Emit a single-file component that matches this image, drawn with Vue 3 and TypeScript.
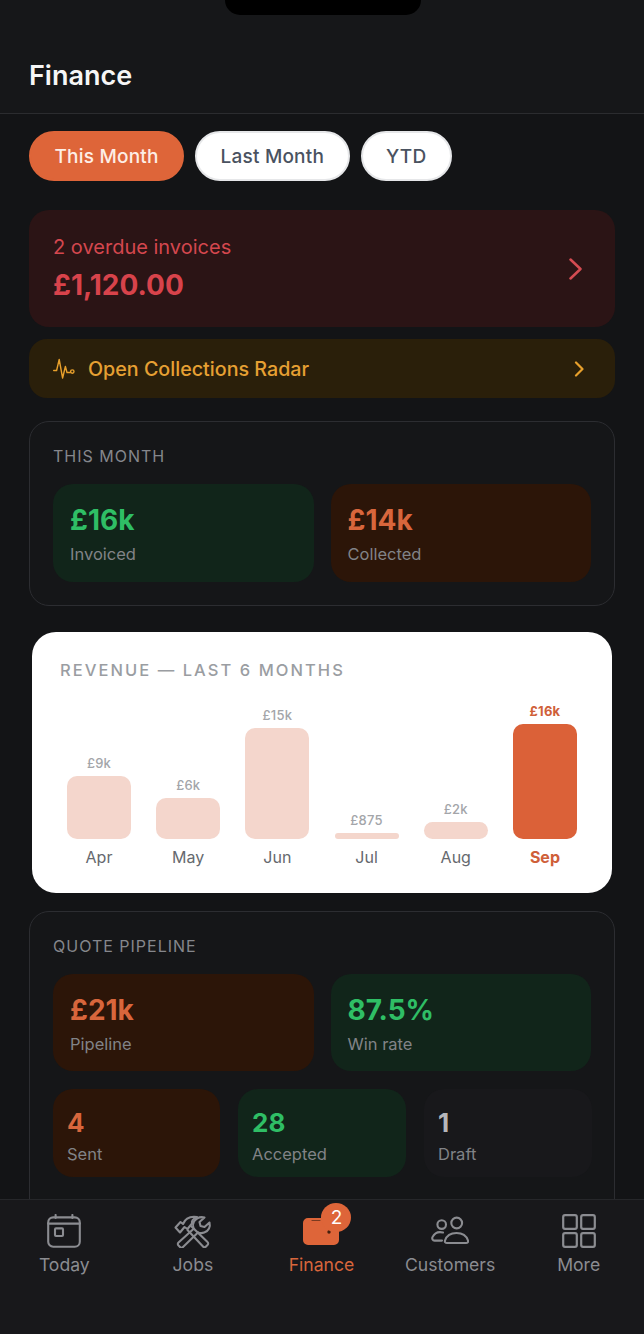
<script setup lang="ts">
interface Bar { month: string; value: string; height: number; current?: boolean }
const bars: Bar[] = [
  { month: 'Apr', value: '£9k', height: 63 },
  { month: 'May', value: '£6k', height: 41 },
  { month: 'Jun', value: '£15k', height: 111 },
  { month: 'Jul', value: '£875', height: 6 },
  { month: 'Aug', value: '£2k', height: 17 },
  { month: 'Sep', value: '£16k', height: 115, current: true },
]
</script>

<template>
  <div class="screen">
    <div class="notch"></div>
    <header class="header"><h1>Finance</h1></header>
    <main class="content">
      <div class="chips">
        <span class="chip active">This Month</span>
        <span class="chip">Last Month</span>
        <span class="chip">YTD</span>
      </div>

      <section class="overdue">
        <div>
          <div class="overdue-label">2 overdue invoices</div>
          <div class="overdue-value">£1,120.00</div>
        </div>
        <svg width="13" height="22" viewBox="0 0 13 22" fill="none" stroke="#d44c52" stroke-width="2.5" stroke-linecap="round" stroke-linejoin="round"><path d="M1.500 1.500L11.500 11L1.500 20.500" /></svg>
      </section>

      <section class="radar">
        <svg class="radar-icon" width="22" height="24" viewBox="0 0 22 24" fill="none" stroke="#e8a02c" stroke-width="1.4" stroke-linecap="round" stroke-linejoin="round"><path d="M0.7 13.500H3.600L6.200 2.500L9.600 21L12.400 9.500L14 15.500H17.200" /><circle cx="19.300" cy="14.600" r="1.700" /></svg>
        <span class="radar-text">Open Collections Radar</span>
        <svg width="11" height="16" viewBox="0 0 11 16" fill="none" stroke="#e8a02c" stroke-width="2.2" stroke-linecap="round" stroke-linejoin="round"><path d="M2 1.500L8.500 8L2 14.500" /></svg>
      </section>

      <section class="card month">
        <div class="card-label">THIS MONTH</div>
        <div class="row">
          <div class="tile green"><div class="big">£16k</div><div class="small">Invoiced</div></div>
          <div class="tile orange"><div class="big">£14k</div><div class="small">Collected</div></div>
        </div>
      </section>

      <section class="revenue">
        <div class="revenue-label">REVENUE — LAST 6 MONTHS</div>
        <div class="chart">
          <div v-for="b in bars" :key="b.month" class="col" :class="{ current: b.current }">
            <div class="val">{{ b.value }}</div>
            <div class="bar" :class="{ thin: b.height < 10 }" :style="{ height: b.height + 'px' }"></div>
            <div class="mon">{{ b.month }}</div>
          </div>
        </div>
      </section>

      <section class="card pipeline">
        <div class="card-label">QUOTE PIPELINE</div>
        <div class="row">
          <div class="tile orange"><div class="big">£21k</div><div class="small">Pipeline</div></div>
          <div class="tile green"><div class="big">87.5%</div><div class="small">Win rate</div></div>
        </div>
        <div class="row three">
          <div class="tile mini orange"><div class="mid">4</div><div class="small">Sent</div></div>
          <div class="tile mini green"><div class="mid">28</div><div class="small">Accepted</div></div>
          <div class="tile mini grey"><div class="mid">1</div><div class="small">Draft</div></div>
        </div>
      </section>
    </main>

    <nav class="tabs">
      <div class="tab">
        <svg width="34" height="34" viewBox="0 0 34 34" fill="none" stroke="#8b8c91" stroke-width="2.1" stroke-linecap="round" stroke-linejoin="round">
          <rect x="1.200" y="3.400" width="31.600" height="29.400" rx="5" />
          <path d="M1.200 9.600h31.600M8.600 1v3M25.400 1v3" />
          <rect x="8" y="14.400" width="8" height="7.600" rx="1" />
        </svg>
        <span>Today</span>
      </div>
      <div class="tab">
        <svg width="38" height="34" viewBox="0 0 38 34" fill="none" stroke="#8b8c91" stroke-width="2.1" stroke-linecap="round" stroke-linejoin="round">
          <path d="M1.500 13.500L6.500 8L9 10C11 5 16 2 23 3C19 5 17.500 7.500 18 9.500L13.500 15L10.500 13L6 18.500Z" />
          <path d="M17 12L33.500 28a2 2 0 0 1 0 3l-1.500 1.500a2 2 0 0 1-3 0L13.500 16" />
          <path d="M20 14.500L4.500 28.500a2 2 0 0 0 0 3L6 33a2 2 0 0 0 3 0L24 18.500" />
          <path d="M24 18.500c4 1.500 9 0 11-4c1-2 1-4 .5-6l-5 4.500-4-1-1-4 5-4.500c-4-1-8 .5-10.500 4c-1 2-1.300 3.800-.7 5.500" />
        </svg>
        <span>Jobs</span>
      </div>
      <div class="tab active">
        <div class="wallet-wrap">
          <svg width="36" height="28" viewBox="0 0 36 28" fill="none">
            <path d="M5 1h19a3 3 0 0 1 3 3v1h4a5 5 0 0 1 5 5v13a5 5 0 0 1-5 5H5a5 5 0 0 1-5-5V6a5 5 0 0 1 5-5z" fill="#de6539" />
            <path d="M9 3.500h8" stroke="#7a3a20" stroke-width="1.200" stroke-linecap="round" />
            <circle cx="26" cy="15" r="1.700" fill="#43200f" />
          </svg>
          <span class="badge">2</span>
        </div>
        <span>Finance</span>
      </div>
      <div class="tab">
        <svg width="38" height="34" viewBox="0 0 38 34" fill="none" stroke="#8b8c91" stroke-width="2.1" stroke-linecap="round" stroke-linejoin="round">
          <circle cx="10.700" cy="10.600" r="4.300" />
          <circle cx="25.700" cy="9" r="5.400" />
          <path d="M12 18.500c-1-.2-2-.4-3-.4c-3.500 0-6 2-7.500 5c-.7 1.500 .2 3.500 2 3.500H11" />
          <path d="M16 29c-1.500 0-2.500-1-2-2.500c1.500-4.500 6-7.500 11.500-7.500s10 3 11.500 7.500c.5 1.500-.5 2.500-2 2.500z" />
        </svg>
        <span>Customers</span>
      </div>
      <div class="tab">
        <svg width="34" height="34" viewBox="0 0 34 34" fill="none" stroke="#8b8c91" stroke-width="2.2" stroke-linejoin="round">
          <rect x="1.200" y="1.200" width="13.600" height="13.600" rx="1.800" />
          <rect x="19.200" y="1.200" width="13.600" height="13.600" rx="1.800" />
          <rect x="1.200" y="19.200" width="13.600" height="13.600" rx="1.800" />
          <rect x="19.200" y="19.200" width="13.600" height="13.600" rx="1.800" />
        </svg>
        <span>More</span>
      </div>
    </nav>
  </div>
</template>

<style>
html, body { margin: 0; background: #131416; }
</style>

<style scoped>
* { box-sizing: border-box; }
.screen {
  position: relative;
  width: 644px;
  height: 1334px;
  display: flex;
  flex-direction: column;
  overflow: hidden;
  background: #131416;
  font-family: Inter, "Liberation Sans", sans-serif;
  color: #fff;
}
.notch {
  position: absolute;
  top: 0;
  left: 225px;
  width: 196px;
  height: 15px;
  background: #000;
  border-radius: 0 0 18px 18px;
}
.header {
  height: 114px;
  flex: none;
  padding: 60px 29px 0;
  border-bottom: 1px solid #2b2c2f;
  background: #161719;
}
h1 {
  margin: 0;
  font-size: 27px;
  line-height: 32px;
  font-weight: 600;
  color: #f6f6f6;
}
.content {
  flex: 1;
  min-height: 0;
  overflow: hidden;
  padding: 17px 29px 0;
  display: flex;
  flex-direction: column;
}
.content > * { flex: none; }
.chips { display: flex; gap: 11px; }
.chip {
  height: 50px;
  padding: 0 23.500px;
  display: flex;
  align-items: center;
  border-radius: 25px;
  background: #fff;
  border: 2px solid #e6e7e9;
  color: #4a5260;
  font-size: 19px;
  font-weight: 500;
  letter-spacing: 0.2px;
}
.chip.active {
  background: #de6539;
  border-color: #de6539;
  color: #fdeee6;
}
.overdue {
  margin-top: 29px;
  height: 117px;
  padding: 0 33px 0 24px;
  display: flex;
  align-items: center;
  justify-content: space-between;
  background: #2b1415;
  border-radius: 20px;
}
.overdue-label { font-size: 20px; line-height: 24px; color: #d4474e; }
.overdue-value { margin-top: 9px; font-size: 28px; line-height: 34px; font-weight: 700; color: #d8434b; }
.radar {
  margin-top: 12px;
  height: 59px;
  padding: 0 30px 0 24px;
  display: flex;
  align-items: center;
  background: #2a1f0a;
  border-radius: 18px;
}
.radar-icon { flex: none; }
.radar-text { flex: 1; margin-left: 13px; font-size: 19.700px; font-weight: 500; color: #e6a033; }
.card {
  background: #151618;
  border: 1px solid #2c2d31;
  border-radius: 20px;
  padding: 23px 23px 0;
}
.month { margin-top: 23px; height: 185px; }
.card-label {
  font-size: 16px;
  line-height: 22px;
  letter-spacing: 1px;
  color: #85878c;
}
.row {
  margin-top: 17px;
  display: grid;
  grid-template-columns: 1fr 1fr;
  gap: 17px;
}
.three { grid-template-columns: 167px 168px 168px; gap: 18px; margin-top: 18px; }
.tile {
  height: 98px;
  padding: 19px 17px 0;
  border-radius: 20px;
}
.green { background: #11251a; }
.orange { background: #2c1508; }
.grey { background: #18181b; }
.big {
  font-size: 28px;
  line-height: 34px;
  font-weight: 700;
}
.green .big, .green .mid { color: #2fbe65; }
.orange .big, .orange .mid { color: #d8663c; }
.grey .mid { color: #b5b6ba; }
.small {
  margin-top: 6px;
  font-size: 16.500px;
  line-height: 22px;
  color: #818387;
}
.tile.mini { height: 88px; padding: 18px 14px 0; }
.mid { font-size: 26px; line-height: 32px; font-weight: 700; }
.mini .small { margin-top: 4px; }
.revenue {
  margin: 26px 0 0 3px;
  width: 580px;
  height: 261px;
  background: #fff;
  border-radius: 24px;
  padding: 27px 28px 0 28px;
}
.revenue-label {
  font-size: 16.500px;
  line-height: 22px;
  letter-spacing: 2.050px;
  color: #9a9da2;
  font-weight: 500;
}
.chart {
  margin-top: 12px;
  height: 174px;
  margin-left: 7px;
  display: grid;
  grid-template-columns: repeat(6, 64px);
  column-gap: 25.200px;
  align-items: end;
}
.col {
  display: flex;
  flex-direction: column;
  align-items: center;
}
.val {
  font-size: 13px;
  line-height: 16px;
  margin-bottom: 5px;
  font-weight: 500;
  color: #a3a5a9;
  letter-spacing: 0.2px;
}
.bar {
  width: 64px;
  background: #f4d6cc;
  border-radius: 10px;
}
.bar.thin { border-radius: 3px; }
.mon {
  margin-top: 8px;
  font-size: 16px;
  line-height: 20px;
  color: #66696e;
}
.current .val { color: #cf6039; font-weight: 700; }
.current .bar { background: #db6138; }
.current .mon { color: #cf6039; font-weight: 700; }
.pipeline {
  margin-top: 18px;
  height: 340px;
}
.pipeline .tile:not(.mini) { height: 97px; }
.tabs {
  height: 135px;
  flex: none;
  padding: 14px 1px 0 0;
  display: grid;
  grid-template-columns: repeat(5, 1fr);
  background: #18181b;
  border-top: 1px solid #26272a;
  position: relative;
}
.tab {
  display: flex;
  flex-direction: column;
  align-items: center;
  color: #8b8c91;
  font-size: 17.600px;
  line-height: 22px;
}
.tab svg { display: block; flex: none; }
.tab > span { margin-top: 6px; }
.tab.active { color: #d8663c; }
.wallet-wrap {
  position: relative;
  height: 34px;
  padding-top: 3px;
}
.badge {
  position: absolute;
  top: -11px;
  left: 18px;
  width: 30px;
  height: 29px;
  border-radius: 50%;
  background: #de6539;
  color: #fff;
  font-size: 19px;
  display: flex;
  align-items: center;
  justify-content: center;
}
</style>
